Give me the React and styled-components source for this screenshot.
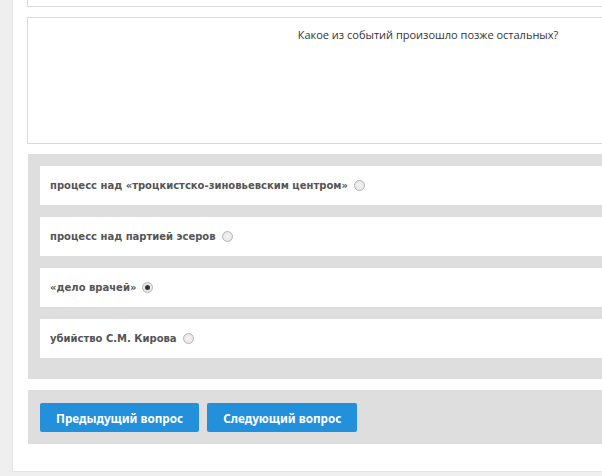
import styled, { createGlobalStyle } from 'styled-components';

const GlobalStyle = createGlobalStyle`
  html, body {
    margin: 0;
    padding: 0;
    background: #efefef;
    overflow: hidden;
  }
`;

const answers = [
  { text: 'процесс над «троцкистско-зиновьевским центром»', checked: false },
  { text: 'процесс над партией эсеров', checked: false },
  { text: '«дело врачей»', checked: true },
  { text: 'убийство С.М. Кирова', checked: false },
];

const App = () => {
  return (
    <Page>
      <GlobalStyle />
      <MainPanel>
        <TopCard />
        <QuestionBox>
          <QuestionText>Какое из событий произошло позже остальных?</QuestionText>
        </QuestionBox>
        <AnswersPanel>
          {answers.map((a) => (
            <AnswerRow key={a.text}>
              <AnswerLabel>{a.text}</AnswerLabel>
              <Radio $checked={a.checked} />
            </AnswerRow>
          ))}
        </AnswersPanel>
        <ButtonsPanel>
          <NavButton>Предыдущий вопрос</NavButton>
          <NavButton>Следующий вопрос</NavButton>
        </ButtonsPanel>
      </MainPanel>
    </Page>
  );
};

export default App;

const Page = styled.div`
  width: 602px;
  height: 476px;
  padding-left: 12px;
  box-sizing: border-box;
  overflow: hidden;
`;

const MainPanel = styled.div`
  width: 900px;
  height: 472px;
  background: #fff;
  border-left: 1px solid #e4e4e4;
  border-bottom: 1px solid #e4e4e4;
  box-sizing: border-box;
  padding-left: 14px;
  display: flex;
  flex-direction: column;
`;

const TopCard = styled.div`
  width: 802px;
  height: 7px;
  border: 1px solid #dadada;
  border-top: none;
  box-sizing: border-box;
`;

const QuestionBox = styled.div`
  width: 802px;
  height: 127px;
  margin-top: 10px;
  border: 1px solid #dadada;
  box-sizing: border-box;
  padding-top: 9px;
  text-align: center;
`;

const QuestionText = styled.p`
  margin: 0;
  font-family: 'Open Sans', sans-serif;
  font-size: 11px;
  color: #333;
`;

const AnswersPanel = styled.div`
  width: 801px;
  margin: 10px 0 0 1px;
  background: #dedede;
  padding: 12px 0 21px 12px;
  box-sizing: border-box;
  display: flex;
  flex-direction: column;
  gap: 12px;
`;

const AnswerRow = styled.div`
  height: 39px;
  background: #fff;
  display: flex;
  align-items: center;
  padding-left: 10px;
  gap: 6px;
`;

const AnswerLabel = styled.span`
  font-family: 'DejaVu Sans', sans-serif;
  font-weight: bold;
  font-size: 10px;
  color: #555;
`;

const Radio = styled.span`
  width: 11px;
  height: 11px;
  border-radius: 50%;
  border: 1px solid #b5b5b5;
  background: radial-gradient(circle, #f4f4f4 0%, #e2e2e2 100%);
  box-sizing: border-box;
  display: flex;
  align-items: center;
  justify-content: center;
  &::after {
    content: '';
    width: 5px;
    height: 5px;
    border-radius: 50%;
    background: ${({ $checked }) => ($checked ? '#333' : 'transparent')};
  }
`;

const ButtonsPanel = styled.div`
  width: 801px;
  height: 54px;
  margin: 11px 0 0 1px;
  background: #dedede;
  padding: 13px 0 0 12px;
  box-sizing: border-box;
  display: flex;
  align-items: flex-start;
  gap: 8px;
`;

const NavButton = styled.button`
  height: 29px;
  padding: 0 16px;
  border: none;
  border-radius: 2px;
  background: #2390dc;
  color: #fff;
  font-family: 'Noto Sans', sans-serif;
  font-weight: bold;
  font-size: 11.7px;
  cursor: pointer;
`;
